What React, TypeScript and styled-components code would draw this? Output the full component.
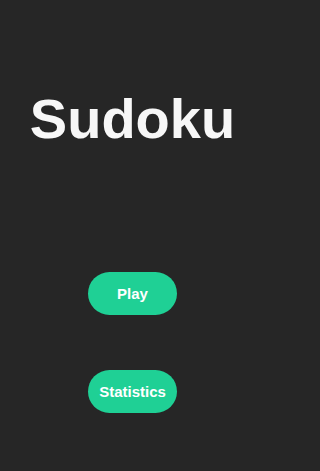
import React from "react";
import { styled, createGlobalStyle } from "styled-components";

const GlobalStyle = createGlobalStyle`
  html, body {
    margin: 0;
    padding: 0;
    background: #262626;
  }
  * {
    box-sizing: border-box;
  }
`;

const Container = styled.div`
  display: flex;
  flex-direction: column;
  align-items: center;
  width: 265px;
  min-height: 471px;
  padding-top: 91px;
  background: #262626;
  font-family: "Liberation Sans", Arial, sans-serif;
`;

const Title = styled.h1`
  margin: 0;
  font-size: 56px;
  line-height: 1;
  font-weight: 700;
  color: #f7f7f7;
`;

const Menu = styled.div`
  display: flex;
  flex-direction: column;
  align-items: center;
  gap: 55px;
  margin-top: 125px;
`;

const MenuButton = styled.button`
  width: 89px;
  height: 43px;
  border: none;
  border-radius: 22px;
  background: #1fd095;
  color: #ffffff;
  font-family: "Liberation Sans", Arial, sans-serif;
  font-size: 15px;
  font-weight: 700;
  padding: 0;
  cursor: pointer;
`;

const App = () => {
  return (
    <Container>
      <GlobalStyle />
      <Title>Sudoku</Title>
      <Menu>
        <MenuButton>Play</MenuButton>
        <MenuButton>Statistics</MenuButton>
      </Menu>
    </Container>
  );
};

export default App;
